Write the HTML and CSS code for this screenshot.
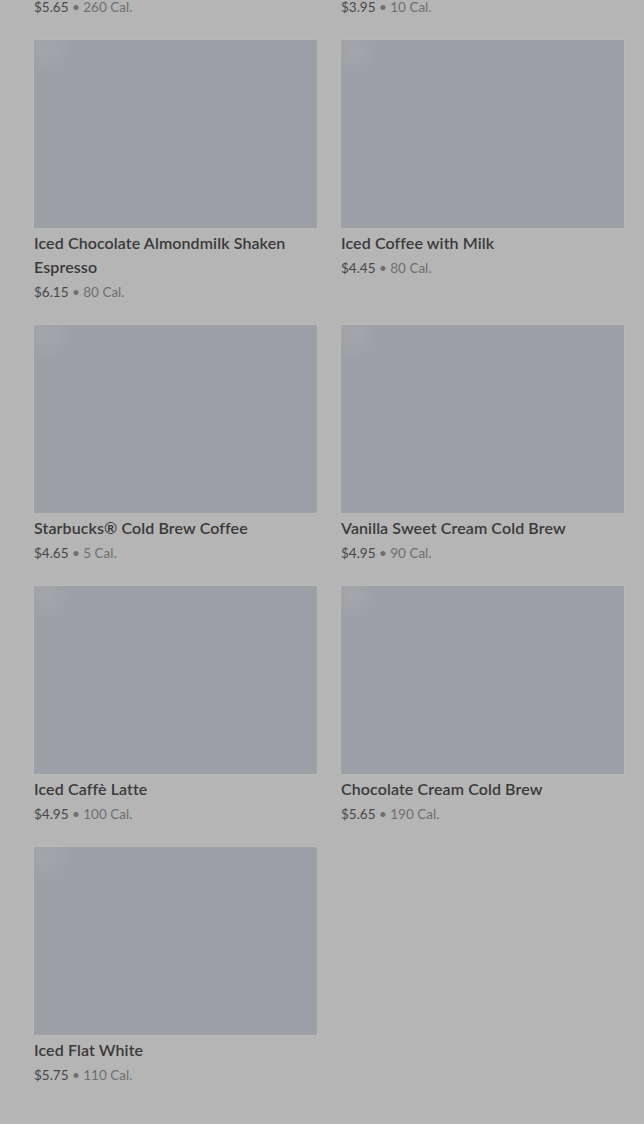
FILE: index.html
```html
<!DOCTYPE html>
<html lang="en">
<head>
<meta charset="utf-8">
<title>Cold Coffees</title>
<link rel="stylesheet" href="styles.css">
</head>
<body>
<main class="menu">
  <div class="grid">
    <div class="card card--cut"><p class="price"><span class="cost">$5.65</span> <span class="cal">• 260 Cal.</span></p></div>
    <div class="card card--cut"><p class="price"><span class="cost">$3.95</span> <span class="cal">• 10 Cal.</span></p></div>

    <div class="card"><div class="thumb"></div><h3 class="name">Iced Chocolate Almondmilk Shaken Espresso</h3><p class="price"><span class="cost">$6.15</span> <span class="cal">• 80 Cal.</span></p></div>
    <div class="card"><div class="thumb"></div><h3 class="name">Iced Coffee with Milk</h3><p class="price"><span class="cost">$4.45</span> <span class="cal">• 80 Cal.</span></p></div>

    <div class="card"><div class="thumb"></div><h3 class="name">Starbucks® Cold Brew Coffee</h3><p class="price"><span class="cost">$4.65</span> <span class="cal">• 5 Cal.</span></p></div>
    <div class="card"><div class="thumb"></div><h3 class="name">Vanilla Sweet Cream Cold Brew</h3><p class="price"><span class="cost">$4.95</span> <span class="cal">• 90 Cal.</span></p></div>

    <div class="card"><div class="thumb"></div><h3 class="name">Iced Caffè Latte</h3><p class="price"><span class="cost">$4.95</span> <span class="cal">• 100 Cal.</span></p></div>
    <div class="card"><div class="thumb"></div><h3 class="name">Chocolate Cream Cold Brew</h3><p class="price"><span class="cost">$5.65</span> <span class="cal">• 190 Cal.</span></p></div>

    <div class="card"><div class="thumb"></div><h3 class="name">Iced Flat White</h3><p class="price"><span class="cost">$5.75</span> <span class="cal">• 110 Cal.</span></p></div>
  </div>
</main>
</body>
</html>
```

FILE: styles.css
```css
html, body {
  margin: 0;
  padding: 0;
  background: #b5b5b5;
  height: 100%;
  overflow: hidden;
}
body {
  font-family: Lato, "Noto Sans", sans-serif;
}
.menu {
  padding: 0 20px 0 34px;
}
.grid {
  display: grid;
  grid-template-columns: 283px 283px;
  column-gap: 24px;
  row-gap: 21px;
}
.card {
  display: flex;
  flex-direction: column;
}
.card--cut {
  margin-top: -6px;
}
.thumb {
  height: 188px;
  background: #9c9fa6;
  box-shadow: 0 0 0 1px rgba(196, 196, 200, 0.3);
  background-image: radial-gradient(circle at 12px 10px, rgba(172,172,176,0.55) 0, rgba(172,172,176,0) 26px);
}
.name {
  margin: 3px 0 0;
  font-size: 16px;
  line-height: 24px;
  font-weight: 600;
  color: #3a3a3a;
  letter-spacing: 0.1px;
}
.price {
  margin: 1px 0 0;
  font-size: 13.5px;
  line-height: 24px;
  letter-spacing: 0;
}
.cost {
  color: #484848;
}
.cal {
  color: #6f6f6f;
}
```
